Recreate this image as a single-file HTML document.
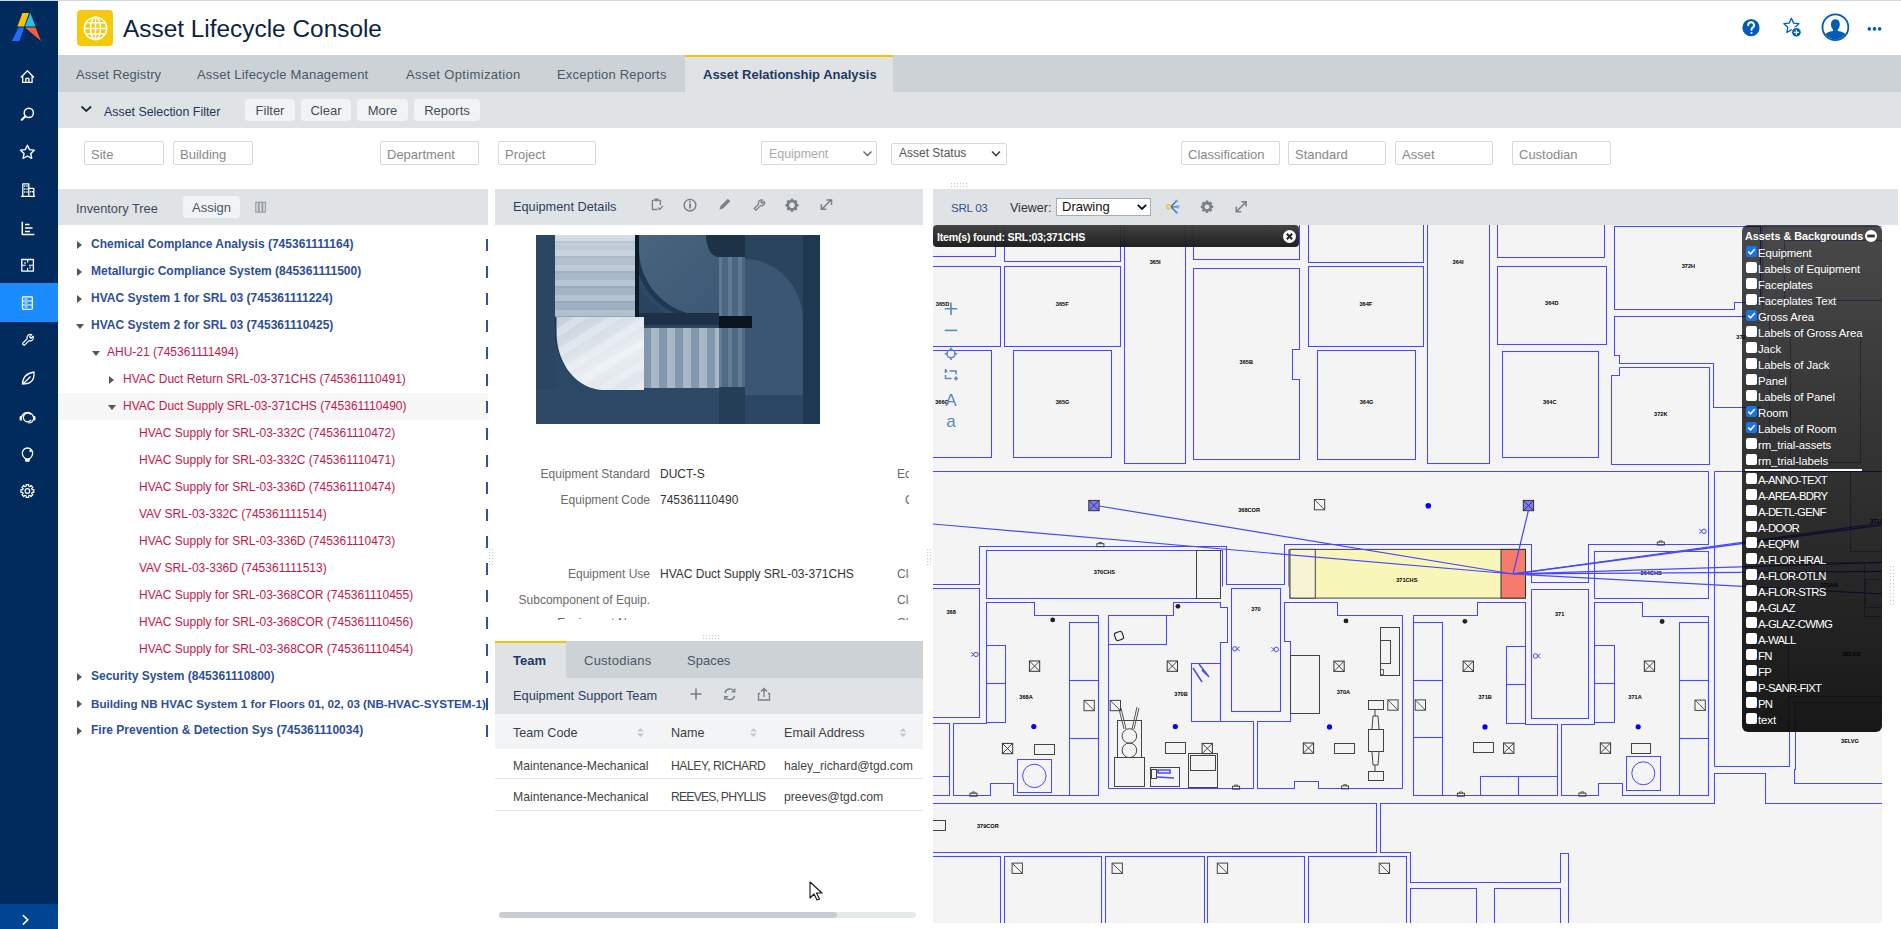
<!DOCTYPE html>
<html><head><meta charset="utf-8">
<style>
*{margin:0;padding:0;box-sizing:border-box}
html,body{width:1901px;height:929px;overflow:hidden;background:#fff;font-family:"Liberation Sans",sans-serif;font-size:12px;color:#333}
.a{position:absolute}
.t{position:absolute;white-space:nowrap;line-height:1}
#topline{left:0;top:0;width:1901px;height:1px;background:#d3d6dc}
#side{left:0;top:1px;width:58px;height:928px;background:#002b5c}
#side .act{left:0;top:282px;width:58px;height:39px;background:#1a8cff}
#side .bot{left:0;top:903px;width:58px;height:26px;background:#004593}
#tabs{left:58px;top:55px;width:1843px;height:37px;background:#cdd2d7}
#fbar{left:58px;top:92px;width:1843px;height:36px;background:#dfe3e6}
.tab{color:#4a5866;font-size:13px;top:68px}
.btn{position:absolute;background:#f1f3f5;border-radius:4px;height:22px;top:99px;color:#454f5a;font-size:13px;text-align:center;line-height:24.5px}
.inp{position:absolute;top:141px;height:24px;border:1px solid #d5d8dc;border-radius:2px;background:#fff;color:#888;font-size:13px;padding-left:6px;line-height:25.5px}
.ph{position:absolute;top:189px;height:36px;background:#dfe3e6}
.tr{position:absolute;white-space:nowrap;font-size:12px;height:27px;line-height:27px}
.lv0{color:#2d4e99;font-weight:bold}
.lv1{color:#c5164a}
.tick{position:absolute;left:486px;width:2px;height:12px;background:#2f5597}
.tri{position:absolute;width:0;height:0}
.tri.r{border-top:4px solid transparent;border-bottom:4px solid transparent;border-left:5px solid #555}
.tri.d{border-left:4px solid transparent;border-right:4px solid transparent;border-top:5px solid #555}
.lbl{position:absolute;right:1251px;color:#6a6a6a;font-size:12px;text-align:right;white-space:nowrap}
.val{position:absolute;left:660px;color:#333;font-size:12px;white-space:nowrap}
.lg{position:absolute;left:1746px;color:#fff;font-size:11.4px;white-space:nowrap;line-height:1}
.cb{position:absolute;left:1746px;width:11px;height:11px;background:#fff;border-radius:2px}
.cb.on{background:#1a73e8}
</style></head><body>
<div id="topline" class="a"></div>
<div id="side" class="a">
  <div class="a act"></div>
  <div class="a bot"></div>
</div>
<!-- header -->
<div class="a" style="left:77px;top:10px;width:36px;height:36px;background:#f7c90c;border-radius:4px"></div>
<div class="t" style="left:123px;top:16.8px;font-size:24.4px;color:#0c2340">Asset Lifecycle Console</div>

<div id="tabs" class="a"></div>
<div id="fbar" class="a"></div>
<div class="a" style="left:685px;top:55px;width:208px;height:37px;background:#dfe3e6;border-top:2px solid #f5c400"></div>
<div class="t tab" style="left:76px;letter-spacing:0.1px">Asset Registry</div>
<div class="t tab" style="left:197px;letter-spacing:0.2px">Asset Lifecycle Management</div>
<div class="t tab" style="left:406px;letter-spacing:0.35px">Asset Optimization</div>
<div class="t tab" style="left:557px;letter-spacing:0.2px">Exception Reports</div>
<div class="t tab" style="left:703px;color:#1d3a5f;font-weight:bold">Asset Relationship Analysis</div>

<div class="t" style="left:104px;top:105.8px;font-size:12.4px;color:#22375a">Asset Selection Filter</div>
<div class="btn" style="left:245px;width:50px">Filter</div>
<div class="btn" style="left:301px;width:50px">Clear</div>
<div class="btn" style="left:357px;width:51px">More</div>
<div class="btn" style="left:414px;width:66px">Reports</div>

<div class="inp" style="left:84px;width:80px">Site</div>
<div class="inp" style="left:173px;width:80px">Building</div>
<div class="inp" style="left:380px;width:99px">Department</div>
<div class="inp" style="left:498px;width:98px">Project</div>
<div class="inp" style="left:761px;width:116px;color:#aaa;font-size:12.4px;padding-left:7px">Equipment</div>
<div class="inp" style="left:891px;top:143px;height:22px;width:116px;color:#555;line-height:19.5px;font-size:12px;padding-left:7px">Asset Status</div>
<div class="inp" style="left:1181px;width:99px">Classification</div>
<div class="inp" style="left:1288px;width:98px">Standard</div>
<div class="inp" style="left:1395px;width:98px">Asset</div>
<div class="inp" style="left:1512px;width:99px">Custodian</div>

<!-- panel headers -->
<div class="ph" style="left:58px;width:430px"></div>
<div class="ph" style="left:495px;width:428px"></div>
<div class="ph" style="left:933px;width:965px"></div>
<div class="t" style="left:76px;top:203px;font-size:12.8px;color:#3d4b5c">Inventory Tree</div>
<div class="a" style="left:183px;top:196px;width:57px;height:22px;background:#f1f3f5;border-radius:4px;color:#4a5866;font-size:13px;text-align:center;line-height:23.5px">Assign</div>
<div class="t" style="left:513px;top:201px;font-size:12.75px;color:#2c3e5c">Equipment Details</div>
<div class="t" style="left:951px;top:202px;font-size:11.6px;letter-spacing:-0.3px;color:#34558a">SRL 03</div>
<div class="t" style="left:1010px;top:202px;font-size:12.5px;color:#333">Viewer:</div>
<div class="a" style="left:1056px;top:198px;width:95px;height:18px;background:#fff;border:1px solid #a9abb8;font-size:13px;color:#111;padding-left:5px;line-height:16px">Drawing</div>

<div id="tree">
<div class="a" style="left:58px;top:393px;width:430px;height:27px;background:#f7f7f7"></div>
<div class="tr lv0" style="left:91px;top:231px;">Chemical Complance Analysis (745361111164)</div>
<div class="tri r" style="left:77px;top:241px"></div>
<div class="tick" style="top:238.5px"></div>
<div class="tr lv0" style="left:91px;top:258px;">Metallurgic Compliance System (845361111500)</div>
<div class="tri r" style="left:77px;top:268px"></div>
<div class="tick" style="top:265.5px"></div>
<div class="tr lv0" style="left:91px;top:285px;">HVAC System 1 for SRL 03 (745361111224)</div>
<div class="tri r" style="left:77px;top:295px"></div>
<div class="tick" style="top:292.5px"></div>
<div class="tr lv0" style="left:91px;top:312px;">HVAC System 2 for SRL 03 (745361110425)</div>
<div class="tri d" style="left:76px;top:323.5px"></div>
<div class="tick" style="top:319.5px"></div>
<div class="tr lv1" style="left:107px;top:339px;">AHU-21 (745361111494)</div>
<div class="tri d" style="left:92px;top:350.5px"></div>
<div class="tick" style="top:346.5px"></div>
<div class="tr lv1" style="left:123px;top:366px;">HVAC Duct Return SRL-03-371CHS (745361110491)</div>
<div class="tri r" style="left:109px;top:376px"></div>
<div class="tick" style="top:373.5px"></div>
<div class="tr lv1" style="left:123px;top:393px;">HVAC Duct Supply SRL-03-371CHS (745361110490)</div>
<div class="tri d" style="left:108px;top:404.5px"></div>
<div class="tick" style="top:400.5px"></div>
<div class="tr lv1" style="left:139px;top:420px;">HVAC Supply for SRL-03-332C (745361110472)</div>
<div class="tick" style="top:427.5px"></div>
<div class="tr lv1" style="left:139px;top:447px;">HVAC Supply for SRL-03-332C (745361110471)</div>
<div class="tick" style="top:454.5px"></div>
<div class="tr lv1" style="left:139px;top:474px;">HVAC Supply for SRL-03-336D (745361110474)</div>
<div class="tick" style="top:481.5px"></div>
<div class="tr lv1" style="left:139px;top:501px;">VAV SRL-03-332C (745361111514)</div>
<div class="tick" style="top:508.5px"></div>
<div class="tr lv1" style="left:139px;top:528px;">HVAC Supply for SRL-03-336D (745361110473)</div>
<div class="tick" style="top:535.5px"></div>
<div class="tr lv1" style="left:139px;top:555px;">VAV SRL-03-336D (745361111513)</div>
<div class="tick" style="top:562.5px"></div>
<div class="tr lv1" style="left:139px;top:582px;">HVAC Supply for SRL-03-368COR (745361110455)</div>
<div class="tick" style="top:589.5px"></div>
<div class="tr lv1" style="left:139px;top:609px;">HVAC Supply for SRL-03-368COR (745361110456)</div>
<div class="tick" style="top:616.5px"></div>
<div class="tr lv1" style="left:139px;top:636px;">HVAC Supply for SRL-03-368COR (745361110454)</div>
<div class="tick" style="top:643.5px"></div>
<div class="tr lv0" style="left:91px;top:663px;">Security System (845361110800)</div>
<div class="tri r" style="left:77px;top:673px"></div>
<div class="tick" style="top:670.5px"></div>
<div class="tr lv0" style="left:91px;top:690px;font-size:11.65px;">Building NB HVAC System 1 for Floors 01, 02, 03 (NB-HVAC-SYSTEM-1)</div>
<div class="tri r" style="left:77px;top:700px"></div>
<div class="tick" style="top:697.5px"></div>
<div class="tr lv0" style="left:91px;top:717px;">Fire Prevention &amp; Detection Sys (745361110034)</div>
<div class="tri r" style="left:77px;top:727px"></div>
<div class="tick" style="top:724.5px"></div>

</div>
<div id="middle">
<!-- middle header icons -->
<svg class="a" style="left:640px;top:192px" width="200" height="26" viewBox="640 192 200 26" fill="none" stroke="#7a7f88" stroke-width="1.4">
  <path d="M654 200.3h-1.6v9.2h5.2M658.8 200.3h1.6v4.6" stroke-linejoin="round" stroke-width="1.3"/><rect x="654.3" y="198.4" width="4.4" height="2.8" rx="0.6" fill="#7a7f88" stroke="none"/><path d="M658 207.6l1.8 1.9 3-3.6" stroke-width="1.3"/>
  <circle cx="690" cy="205.2" r="5.8"/><path d="M690 203.6v5" stroke-width="1.8"/><circle cx="690" cy="201.6" r="1" fill="#7a7f88" stroke="none"/>
  <path d="M719.5 209.6l1-3.5 7.3-7.3 2.5 2.5-7.3 7.3z" fill="#7a7f88" stroke="none"/>
  <g transform="translate(765 199.3) scale(-0.47 0.47)"><path d="M22.7 19l-9.1-9.1c.9-2.3.4-5-1.5-6.9-2-2-5-2.4-7.4-1.3L9 6 6 9 1.6 4.7C.4 7.1.9 10.1 2.9 12.1c1.9 1.9 4.6 2.4 6.9 1.5l9.1 9.1c.4.4 1 .4 1.4 0l2.3-2.3c.5-.4.5-1.1.1-1.4z" stroke-width="2.6" stroke-linejoin="round"/></g>
  <g transform="translate(792 205.2)"><circle r="4.2" stroke-width="2.6"/><path d="M0-6.5v2.2M0 4.3v2.2M-6.5 0h2.2M4.3 0h2.2M-4.6-4.6l1.5 1.5M3.1 3.1l1.5 1.5M-4.6 4.6l1.5-1.5M3.1-3.1l1.5-1.5" stroke-width="2.6"/></g>
  <path d="M822 209l9-9 M826.5 200h5v5 M821.3 204.3v5h5" stroke-width="1.5"/>
</svg>
<!-- photo -->
<svg class="a" style="left:536px;top:235px" width="284" height="189" viewBox="0 0 284 189">
  <defs>
    <linearGradient id="lduct" x1="0" y1="0" x2="0" y2="1"><stop offset="0" stop-color="#c9d4de"/><stop offset="0.45" stop-color="#a9b9c9"/><stop offset="1" stop-color="#9aadbf"/></linearGradient>
    <linearGradient id="elb" x1="0" y1="0" x2="0.6" y2="1"><stop offset="0" stop-color="#c3cfdb"/><stop offset="0.7" stop-color="#e9eef3"/><stop offset="1" stop-color="#dfe6ed"/></linearGradient>
    <linearGradient id="topm" x1="0" y1="0" x2="1" y2="1"><stop offset="0" stop-color="#48647f"/><stop offset="1" stop-color="#3c5874"/></linearGradient>
    <pattern id="hstr" width="10" height="15" patternUnits="userSpaceOnUse"><rect width="10" height="6" fill="#fff" opacity="0.22"/><rect y="6" width="10" height="2" fill="#000" opacity="0.05"/></pattern>
    <pattern id="vstr" width="16" height="10" patternUnits="userSpaceOnUse"><rect x="3" width="8" height="10" fill="#fff" opacity="0.32"/></pattern>
    <pattern id="vstr2" width="10" height="10" patternUnits="userSpaceOnUse"><rect x="2" width="4" height="10" fill="#fff" opacity="0.12"/></pattern>
    <pattern id="dstr" width="18" height="18" patternUnits="userSpaceOnUse" patternTransform="rotate(-32)"><rect width="18" height="8" fill="#fff" opacity="0.25"/></pattern>
  </defs>
  <rect width="284" height="189" fill="#2c4864"/>
  <rect x="0" y="0" width="19" height="189" fill="#2a4662"/>
  <path d="M99 0h85v81h-14c-40 0-71-30-71-66z" fill="url(#topm)"/>
  <path d="M103 15c0 36 31 66 67 66h14v3h-16c-40 0-69-30-69-69z" fill="#1f3750"/>
  <path d="M99 40c8 25 30 45 60 45h25v8h-85z" fill="#2a4460"/>
  <path d="M170 0h45v22h-32c-8 0-13-10-13-22z" fill="#1d3147"/>
  <rect x="183" y="22" width="26" height="59" fill="#4a6682"/>
  <rect x="183" y="22" width="26" height="59" fill="url(#vstr2)"/>
  <rect x="209" y="0" width="75" height="189" fill="#2a4460"/>
  <path d="M209 24c32 0 58 28 58 62v79h-58z" fill="#3a5672"/>
  <rect x="267" y="0" width="17" height="189" fill="#1f3852"/>
  <rect x="99" y="78" width="84" height="12" fill="#1c3048"/>
  <rect x="183" y="81" width="33" height="12" fill="#0a1520"/>
  <rect x="19" y="0" width="80" height="82" fill="url(#lduct)"/>
  <rect x="19" y="0" width="80" height="82" fill="url(#hstr)"/>
  <rect x="99" y="0" width="4" height="93" fill="#0e1a26"/>
  <path d="M19 82h89v73h-40c-27 0-49-26-49-58z" fill="#1e3650"/>
  <path d="M20.5 82h87.5v73h-40c-26.5 0-47.5-25.5-47.5-57.5z" fill="url(#elb)"/>
  <path d="M21 82h87v73h-40c-26 0-47-25-47-57z" fill="url(#dstr)"/>
  <rect x="108" y="93" width="75" height="60" fill="#8097ac"/>
  <rect x="108" y="93" width="75" height="60" fill="url(#vstr)"/>
  <rect x="183" y="93" width="26" height="60" fill="#4f6a85"/>
  <rect x="183" y="93" width="26" height="60" fill="url(#vstr2)"/>
  <rect x="0" y="155" width="183" height="34" fill="#2d4965"/>
  <rect x="183" y="152" width="26" height="37" fill="#243e58"/>
  <rect x="209" y="160" width="58" height="29" fill="#2c4763"/>
</svg>
<!-- form -->
<div style="position:absolute;left:495px;top:440px;width:428px;height:179.5px;overflow:hidden">
  <div class="lbl" style="right:273px;top:27px">Equipment Standard</div>
  <div class="val" style="left:165px;top:27px">DUCT-S</div>
  <div class="lbl" style="right:273px;top:53px">Equipment Code</div>
  <div class="val" style="left:165px;top:53px">745361110490</div>
  <div class="lbl" style="right:273px;top:127px">Equipment Use</div>
  <div class="val" style="left:165px;top:127px">HVAC Duct Supply SRL-03-371CHS</div>
  <div class="lbl" style="right:273px;top:153px">Subcomponent of Equip.</div>
  <div class="lbl" style="right:273px;top:176.3px">Equipment Name</div>
  <div class="lbl" style="left:402px;top:27px;text-align:left">Equipment</div>
  <div class="lbl" style="left:410px;top:53px;text-align:left">Cost</div>
  <div class="lbl" style="left:402px;top:127px;text-align:left">Classification</div>
  <div class="lbl" style="left:402px;top:153px;text-align:left">Classification</div>
  <div class="lbl" style="left:402px;top:176.3px;text-align:left">Classification</div>
</div>
<div class="a" style="left:909px;top:440px;width:14px;height:180px;background:#fff"></div>
<!-- splitter grips -->
<svg class="a" style="left:700px;top:634px" width="24" height="6"><g fill="#c8ccd1"><rect x="3" y="1" width="1.2" height="1.2"/><rect x="6" y="1" width="1.2" height="1.2"/><rect x="9" y="1" width="1.2" height="1.2"/><rect x="12" y="1" width="1.2" height="1.2"/><rect x="15" y="1" width="1.2" height="1.2"/><rect x="18" y="1" width="1.2" height="1.2"/><rect x="3" y="4" width="1.2" height="1.2"/><rect x="6" y="4" width="1.2" height="1.2"/><rect x="9" y="4" width="1.2" height="1.2"/><rect x="12" y="4" width="1.2" height="1.2"/><rect x="15" y="4" width="1.2" height="1.2"/><rect x="18" y="4" width="1.2" height="1.2"/></g></svg>
<svg class="a" style="left:948px;top:182px" width="24" height="6"><g fill="#c8ccd1"><rect x="3" y="1" width="1.2" height="1.2"/><rect x="6" y="1" width="1.2" height="1.2"/><rect x="9" y="1" width="1.2" height="1.2"/><rect x="12" y="1" width="1.2" height="1.2"/><rect x="15" y="1" width="1.2" height="1.2"/><rect x="18" y="1" width="1.2" height="1.2"/><rect x="3" y="4" width="1.2" height="1.2"/><rect x="6" y="4" width="1.2" height="1.2"/><rect x="9" y="4" width="1.2" height="1.2"/><rect x="12" y="4" width="1.2" height="1.2"/><rect x="15" y="4" width="1.2" height="1.2"/><rect x="18" y="4" width="1.2" height="1.2"/></g></svg>
<svg class="a" style="left:488px;top:546px" width="6" height="24"><g fill="#c8ccd1"><rect x="1" y="3" width="1.2" height="1.2"/><rect x="1" y="6" width="1.2" height="1.2"/><rect x="1" y="9" width="1.2" height="1.2"/><rect x="1" y="12" width="1.2" height="1.2"/><rect x="1" y="15" width="1.2" height="1.2"/><rect x="1" y="18" width="1.2" height="1.2"/><rect x="4" y="3" width="1.2" height="1.2"/><rect x="4" y="6" width="1.2" height="1.2"/><rect x="4" y="9" width="1.2" height="1.2"/><rect x="4" y="12" width="1.2" height="1.2"/><rect x="4" y="15" width="1.2" height="1.2"/><rect x="4" y="18" width="1.2" height="1.2"/></g></svg>
<svg class="a" style="left:926px;top:546px" width="6" height="24"><g fill="#c8ccd1"><rect x="1" y="3" width="1.2" height="1.2"/><rect x="1" y="6" width="1.2" height="1.2"/><rect x="1" y="9" width="1.2" height="1.2"/><rect x="1" y="12" width="1.2" height="1.2"/><rect x="1" y="15" width="1.2" height="1.2"/><rect x="1" y="18" width="1.2" height="1.2"/><rect x="4" y="3" width="1.2" height="1.2"/><rect x="4" y="6" width="1.2" height="1.2"/><rect x="4" y="9" width="1.2" height="1.2"/><rect x="4" y="12" width="1.2" height="1.2"/><rect x="4" y="15" width="1.2" height="1.2"/><rect x="4" y="18" width="1.2" height="1.2"/></g></svg>
<svg class="a" style="left:1889px;top:563px" width="6" height="46"><g fill="#c8ccd1"><rect x="1" y="3.0" width="1.2" height="1.2"/><rect x="4" y="3.0" width="1.2" height="1.2"/><rect x="1" y="6.4" width="1.2" height="1.2"/><rect x="4" y="6.4" width="1.2" height="1.2"/><rect x="1" y="9.8" width="1.2" height="1.2"/><rect x="4" y="9.8" width="1.2" height="1.2"/><rect x="1" y="13.2" width="1.2" height="1.2"/><rect x="4" y="13.2" width="1.2" height="1.2"/><rect x="1" y="16.6" width="1.2" height="1.2"/><rect x="4" y="16.6" width="1.2" height="1.2"/><rect x="1" y="20.0" width="1.2" height="1.2"/><rect x="4" y="20.0" width="1.2" height="1.2"/><rect x="1" y="23.4" width="1.2" height="1.2"/><rect x="4" y="23.4" width="1.2" height="1.2"/><rect x="1" y="26.8" width="1.2" height="1.2"/><rect x="4" y="26.8" width="1.2" height="1.2"/><rect x="1" y="30.2" width="1.2" height="1.2"/><rect x="4" y="30.2" width="1.2" height="1.2"/><rect x="1" y="33.6" width="1.2" height="1.2"/><rect x="4" y="33.6" width="1.2" height="1.2"/><rect x="1" y="37.0" width="1.2" height="1.2"/><rect x="4" y="37.0" width="1.2" height="1.2"/><rect x="1" y="40.4" width="1.2" height="1.2"/><rect x="4" y="40.4" width="1.2" height="1.2"/></g></svg>
<!-- tabs -->
<div class="a" style="left:495px;top:641px;width:428px;height:37px;background:#cdd2d7"></div>
<div class="a" style="left:495px;top:641px;width:71px;height:37px;background:#dfe3e6;border-top:2px solid #f5c400"></div>
<div class="t" style="left:513px;top:654px;font-size:13px;font-weight:bold;color:#1d3a5f">Team</div>
<div class="t" style="left:584px;top:654px;font-size:13px;color:#4a5866;letter-spacing:0.25px">Custodians</div>
<div class="t" style="left:687px;top:654px;font-size:13px;color:#4a5866">Spaces</div>
<div class="a" style="left:495px;top:678px;width:428px;height:36px;background:#dfe3e6"></div>
<div class="t" style="left:513px;top:690px;font-size:12.8px;color:#2c3e5c">Equipment Support Team</div>
<svg class="a" style="left:680px;top:682px" width="100" height="24" viewBox="680 682 100 24" fill="none" stroke="#7a7f88">
  <path d="M696 688.5v11M690.5 694h11" stroke-width="1.6"/>
  <path d="M734.3 691.5a5 5 0 0 0-9.3 1.5M725.2 697a5 5 0 0 0 9.3-1.2" stroke-width="1.4"/><path d="M734.8 688.5v3.3h-3.3M724.8 700v-3.3h3.3" stroke-width="1.3"/>
  <path d="M760 693.5h-1.5v6.5h11v-6.5h-1.5M764 697v-8.5M761 691.5l3-3 3 3" stroke-width="1.3"/>
</svg>
<div class="a" style="left:495px;top:714px;width:428px;height:35px;background:#f3f4f6"></div>
<div class="t" style="left:513px;top:727px;font-size:12.6px;color:#3a3f45">Team Code</div>
<div class="t" style="left:671px;top:727px;font-size:12.6px;color:#3a3f45">Name</div>
<div class="t" style="left:784px;top:727px;font-size:12.6px;color:#3a3f45">Email Address</div>
<svg class="a" style="left:630px;top:724px" width="280" height="18" viewBox="630 724 280 18" fill="#c5c9ce">
  <path d="M637 731.5l3.5-3.5 3.5 3.5zM637 733.5l3.5 3.5 3.5-3.5z"/>
  <path d="M750 731.5l3.5-3.5 3.5 3.5zM750 733.5l3.5 3.5 3.5-3.5z"/>
  <path d="M899.5 731.5l3.5-3.5 3.5 3.5zM899.5 733.5l3.5 3.5 3.5-3.5z"/>
</svg>
<div class="t" style="left:513px;top:760px;font-size:12.2px;color:#444">Maintenance-Mechanical</div>
<div class="t" style="left:671px;top:760px;font-size:12.2px;color:#444;letter-spacing:-0.45px">HALEY, RICHARD</div>
<div class="t" style="left:784px;top:760px;font-size:12.2px;color:#444">haley_richard@tgd.com</div>
<div class="a" style="left:495px;top:778px;width:428px;height:1px;background:#e3e5e8"></div>
<div class="t" style="left:513px;top:791px;font-size:12.2px;color:#444">Maintenance-Mechanical</div>
<div class="t" style="left:671px;top:791px;font-size:12.2px;color:#444;letter-spacing:-0.8px">REEVES, PHYLLIS</div>
<div class="t" style="left:784px;top:791px;font-size:12.2px;color:#444">preeves@tgd.com</div>
<div class="a" style="left:495px;top:810px;width:428px;height:1px;background:#e3e5e8"></div>
<!-- h scrollbar -->
<div class="a" style="left:499px;top:912px;width:417px;height:6px;background:#e6e9ea;border-radius:3px"></div>
<div class="a" style="left:499px;top:912px;width:338px;height:6px;background:#c9cdd2;border-radius:3px"></div>
<!-- cursor -->
<svg class="a" style="left:808px;top:880px" width="16" height="22" viewBox="0 0 16 22"><path d="M2 2v16l4-4 3 6 2.5-1-3-6h5.5z" fill="#fff" stroke="#111" stroke-width="1.1" stroke-linejoin="round"/></svg>

</div>
<div id="drawing">
<svg class="a" style="left:933px;top:225px" width="949" height="698" viewBox="933 225 949 698">
<rect x="933" y="225" width="949" height="698" fill="#f4f4f4"/>
<rect x="920.5" y="200.5" width="75.0" height="56.0" stroke="#4848ff" stroke-width="1.05" fill="none"/>
<rect x="1004.5" y="200.5" width="116.0" height="61.0" stroke="#4848ff" stroke-width="1.05" fill="none"/>
<rect x="1124.5" y="200.5" width="61.0" height="263.0" stroke="#4848ff" stroke-width="1.05" fill="none"/>
<rect x="1193.5" y="200.5" width="106.0" height="59.0" stroke="#4848ff" stroke-width="1.05" fill="none"/>
<rect x="920.5" y="266.5" width="80.0" height="80.0" stroke="#4848ff" stroke-width="1.05" fill="none"/>
<rect x="1004.5" y="266.5" width="116.0" height="80.0" stroke="#4848ff" stroke-width="1.05" fill="none"/>
<rect x="920.5" y="350.5" width="71.0" height="107.0" stroke="#4848ff" stroke-width="1.05" fill="none"/>
<rect x="1013.5" y="350.5" width="98.0" height="107.0" stroke="#4848ff" stroke-width="1.05" fill="none"/>
<path d="M1193.5 268.5 L1299.5 268.5 L1299.5 349.5 L1292.5 349.5 L1292.5 379.5 L1299.5 379.5 L1299.5 459.5 L1193.5 459.5 Z" stroke="#4848ff" stroke-width="1.05" fill="none"/>
<rect x="1308.5" y="200.5" width="115.0" height="62.0" stroke="#4848ff" stroke-width="1.05" fill="none"/>
<rect x="1308.5" y="266.5" width="115.0" height="80.0" stroke="#4848ff" stroke-width="1.05" fill="none"/>
<rect x="1317.5" y="350.5" width="98.0" height="109.0" stroke="#4848ff" stroke-width="1.05" fill="none"/>
<rect x="1427.5" y="200.5" width="62.0" height="263.0" stroke="#4848ff" stroke-width="1.05" fill="none"/>
<rect x="1497.5" y="200.5" width="107.0" height="57.0" stroke="#4848ff" stroke-width="1.05" fill="none"/>
<rect x="1497.5" y="266.5" width="109.0" height="78.0" stroke="#4848ff" stroke-width="1.05" fill="none"/>
<rect x="1502.5" y="351.5" width="96.0" height="106.0" stroke="#4848ff" stroke-width="1.05" fill="none"/>
<path d="M1614.5 226.5 L1760.5 226.5 L1760.5 302.5 L1734.5 302.5 L1734.5 309.5 L1614.5 309.5 Z" stroke="#4848ff" stroke-width="1.05" fill="none"/>
<path d="M1760.5 316.5 L1614.5 316.5 L1614.5 355.5 L1619.5 355.5 L1619.5 363.5 L1713.5 363.5 L1713.5 407.5 L1760.5 407.5" stroke="#4848ff" stroke-width="1.05" fill="none"/>
<path d="M1619.5 367.5 L1709.5 367.5 L1709.5 464.5 L1611.5 464.5 L1611.5 375.5 L1619.5 375.5 L1619.5 367.5" stroke="#4848ff" stroke-width="1.05" fill="none"/>
<line x1="920.5" y1="471.5" x2="1708.5" y2="471.5" stroke="#4848ff" stroke-width="1.05"/>
<line x1="1714.5" y1="471.5" x2="1900.5" y2="471.5" stroke="#4848ff" stroke-width="1.05"/>
<path d="M920.5 584.5 L979.5 584.5 L979.5 546.5 L1226.5 546.5 L1226.5 584.5 L1284.5 584.5 L1284.5 544.5 L1531.5 544.5 L1531.5 582.5 L1588.5 582.5 L1588.5 544.5 L1708.5 544.5 L1708.5 471.5" stroke="#4848ff" stroke-width="1.05" fill="none"/>
<line x1="1714.5" y1="471.5" x2="1714.5" y2="766.5" stroke="#4848ff" stroke-width="1.05"/>
<path d="M1222.5 586.5 L1222.5 550.5 L986.5 550.5 L986.5 598.5 L1220.5 598.5" stroke="#4848ff" stroke-width="1.05" fill="none"/>
<rect x="1196.5" y="550.5" width="24.0" height="48.0" stroke="#444" stroke-width="1" fill="none"/>
<rect x="1290" y="549.4" width="235.5" height="48.7" fill="#f8f6b9" stroke="#444" stroke-width="1"/>
<rect x="1290" y="549.4" width="25.3" height="48.7" fill="#f6f4d4" stroke="#444" stroke-width="1"/>
<line x1="1288.5" y1="549.5" x2="1288.5" y2="586.5" stroke="#777" stroke-width="0.8"/>
<rect x="1501" y="549.4" width="24.5" height="48.7" fill="#f77b6b" stroke="#333" stroke-width="1"/>
<path d="M1594.5 598.5 L1594.5 551.5 L1708.5 551.5 L1708.5 598.5 L1594.5 598.5" stroke="#4848ff" stroke-width="1.05" fill="none"/>
<path d="M920.5 588.5 L979.5 588.5 L979.5 717.5 L920.5 717.5" stroke="#4848ff" stroke-width="1.05" fill="none"/>
<path d="M1098.5 795.5 L1098.5 615.5 L1034.5 615.5 L1034.5 602.5 L986.5 602.5 L986.5 723.5 L953.5 723.5 L953.5 795.5 L990.5 795.5 L990.5 783.5 L1013.5 783.5 L1013.5 795.5 L1098.5 795.5" stroke="#4848ff" stroke-width="1.05" fill="none"/>
<rect x="986.5" y="645.5" width="19.0" height="38.0" stroke="#4848ff" stroke-width="1.05" fill="none"/>
<rect x="986.5" y="683.5" width="19.0" height="39.0" stroke="#4848ff" stroke-width="1.05" fill="none"/>
<rect x="1069.5" y="622.5" width="29.0" height="58.0" stroke="#4848ff" stroke-width="1.05" fill="none"/>
<rect x="1069.5" y="680.5" width="29.0" height="58.0" stroke="#4848ff" stroke-width="1.05" fill="none"/>
<rect x="1069.5" y="738.5" width="29.0" height="57.0" stroke="#4848ff" stroke-width="1.05" fill="none"/>
<path d="M920.5 723.5 L949.5 723.5 L949.5 795.5 L920.5 795.5" stroke="#4848ff" stroke-width="1.05" fill="none"/>
<line x1="920.5" y1="776.5" x2="949.5" y2="776.5" stroke="#4848ff" stroke-width="1.05"/>
<path d="M1108.5 788.5 L1108.5 615.5 L1173.5 615.5 L1173.5 602.5 L1220.5 602.5 L1220.5 607.5 L1227.5 607.5 L1227.5 642.5 L1220.5 642.5 L1220.5 721.5 L1253.5 721.5 L1253.5 788.5 L1108.5 788.5" stroke="#4848ff" stroke-width="1.05" fill="none"/>
<rect x="1108.5" y="615.5" width="58.0" height="29.0" stroke="#4848ff" stroke-width="1.05" fill="none"/>
<rect x="1191.5" y="663.5" width="29.0" height="58.0" stroke="#4848ff" stroke-width="1.05" fill="none"/>
<rect x="1231.5" y="588.5" width="49.0" height="123.0" stroke="#4848ff" stroke-width="1.05" fill="none"/>
<path d="M1402.5 788.5 L1402.5 615.5 L1337.5 615.5 L1337.5 602.5 L1284.5 602.5 L1284.5 641.5 L1290.5 641.5 L1290.5 721.5 L1257.5 721.5 L1257.5 788.5 L1294.5 788.5 L1294.5 781.5 L1318.5 781.5 L1318.5 788.5 L1402.5 788.5" stroke="#4848ff" stroke-width="1.05" fill="none"/>
<path d="M1413.5 795.5 L1413.5 615.5 L1477.5 615.5 L1477.5 602.5 L1525.5 602.5 L1525.5 724.5 L1557.5 724.5 L1557.5 795.5 L1413.5 795.5" stroke="#4848ff" stroke-width="1.05" fill="none"/>
<rect x="1413.5" y="622.5" width="29.0" height="58.0" stroke="#4848ff" stroke-width="1.05" fill="none"/>
<rect x="1413.5" y="680.5" width="29.0" height="57.0" stroke="#4848ff" stroke-width="1.05" fill="none"/>
<rect x="1413.5" y="737.5" width="29.0" height="58.0" stroke="#4848ff" stroke-width="1.05" fill="none"/>
<rect x="1506.5" y="646.5" width="19.0" height="38.0" stroke="#4848ff" stroke-width="1.05" fill="none"/>
<rect x="1506.5" y="684.5" width="19.0" height="39.0" stroke="#4848ff" stroke-width="1.05" fill="none"/>
<rect x="1480.5" y="776.5" width="38.0" height="19.0" stroke="#4848ff" stroke-width="1.05" fill="none"/>
<rect x="1518.5" y="776.5" width="39.0" height="19.0" stroke="#4848ff" stroke-width="1.05" fill="none"/>
<path d="M1531.5 589.5 L1588.5 589.5 L1588.5 718.5 L1531.5 718.5 L1531.5 589.5" stroke="#4848ff" stroke-width="1.05" fill="none"/>
<path d="M1708.5 795.5 L1708.5 616.5 L1642.5 616.5 L1642.5 602.5 L1594.5 602.5 L1594.5 724.5 L1561.5 724.5 L1561.5 795.5 L1598.5 795.5 L1598.5 783.5 L1622.5 783.5 L1622.5 795.5 L1708.5 795.5" stroke="#4848ff" stroke-width="1.05" fill="none"/>
<rect x="1594.5" y="645.5" width="20.0" height="38.0" stroke="#4848ff" stroke-width="1.05" fill="none"/>
<rect x="1594.5" y="683.5" width="20.0" height="39.0" stroke="#4848ff" stroke-width="1.05" fill="none"/>
<rect x="1679.5" y="622.5" width="29.0" height="58.0" stroke="#4848ff" stroke-width="1.05" fill="none"/>
<rect x="1679.5" y="680.5" width="29.0" height="58.0" stroke="#4848ff" stroke-width="1.05" fill="none"/>
<rect x="1679.5" y="738.5" width="29.0" height="57.0" stroke="#4848ff" stroke-width="1.05" fill="none"/>
<line x1="1561.5" y1="795.5" x2="1561.5" y2="724.5" stroke="#4848ff" stroke-width="1.05"/>
<path d="M1714.5 766.5 L1789.5 766.5 L1789.5 731.5" stroke="#4848ff" stroke-width="1.05" fill="none"/>
<path d="M1795.5 731.5 L1795.5 769.5 L1794.5 769.5 L1794.5 783.5 L1900.5 783.5" stroke="#4848ff" stroke-width="1.05" fill="none"/>
<path d="M920.5 803.5 L1376.5 803.5 L1376.5 852.5 L920.5 852.5" stroke="#4848ff" stroke-width="1.05" fill="none"/>
<path d="M1900.5 803.5 L1765.5 803.5 L1765.5 773.5 L1714.5 773.5 L1714.5 803.5 L1380.5 803.5 L1380.5 852.5 L1410.5 852.5 L1410.5 882.5 L1560.5 882.5 L1560.5 853.5 L1568.5 853.5 L1568.5 930.5" stroke="#4848ff" stroke-width="1.05" fill="none"/>
<rect x="920.5" y="856.5" width="80.0" height="84.0" stroke="#4848ff" stroke-width="1.05" fill="none"/>
<rect x="1004.5" y="856.5" width="97.0" height="84.0" stroke="#4848ff" stroke-width="1.05" fill="none"/>
<rect x="1105.5" y="856.5" width="99.0" height="84.0" stroke="#4848ff" stroke-width="1.05" fill="none"/>
<rect x="1207.5" y="856.5" width="97.0" height="84.0" stroke="#4848ff" stroke-width="1.05" fill="none"/>
<rect x="1308.5" y="856.5" width="98.0" height="84.0" stroke="#4848ff" stroke-width="1.05" fill="none"/>
<rect x="1410.5" y="888.5" width="66.0" height="52.0" stroke="#4848ff" stroke-width="1.05" fill="none"/>
<rect x="1494.5" y="888.5" width="66.0" height="52.0" stroke="#4848ff" stroke-width="1.05" fill="none"/>
<g opacity="0.5">
<path d="M1760.5 226.5 L1882.5 226.5" stroke="#4848ff" stroke-width="1.05" fill="none"/>
<path d="M1762.5 226.5 L1762.5 309.5" stroke="#4848ff" stroke-width="1.05" fill="none"/>
<path d="M1769.5 316.5 L1769.5 470.5" stroke="#4848ff" stroke-width="1.05" fill="none"/>
<rect x="1784.5" y="240.5" width="98.0" height="60.0" stroke="#4848ff" stroke-width="1.05" fill="none"/>
<rect x="1790.5" y="330.5" width="70.0" height="132.0" stroke="#4848ff" stroke-width="1.05" fill="none"/>
<path d="M1850.5 471.5 L1850.5 551.5 L1882.5 551.5" stroke="#4848ff" stroke-width="1.05" fill="none"/>
<path d="M1788.5 731.5 L1788.5 562.5 L1864.5 562.5 L1864.5 616.5 L1882.5 616.5" stroke="#4848ff" stroke-width="1.05" fill="none"/>
<rect x="1865.5" y="579.5" width="25.0" height="28.0" stroke="#4848ff" stroke-width="1.05" fill="none"/>
<path d="M1795.5 731.5 L1795.5 702.5 L1882.5 702.5" stroke="#4848ff" stroke-width="1.05" fill="none"/>
<path d="M1788.5 696.5 L1882.5 696.5" stroke="#4848ff" stroke-width="1.05" fill="none"/>
</g>
<rect x="1088.8" y="500.4" width="10.3" height="10.3" stroke="#333" stroke-width="1" fill="#7b7bff"/>
<path d="M1088.8 500.4L1099.0 510.7M1099.0 500.4L1088.8 510.7" stroke="#333" stroke-width="0.9"/>
<rect x="1523.3" y="500.4" width="10.3" height="10.3" stroke="#333" stroke-width="1" fill="#7b7bff"/>
<path d="M1523.3 500.4L1533.6 510.7M1533.6 500.4L1523.3 510.7" stroke="#333" stroke-width="0.9"/>
<rect x="1314.4" y="499.5" width="10.3" height="10.3" stroke="#444" stroke-width="1" fill="none"/>
<path d="M1314.4 499.5L1324.7 509.8" stroke="#444" stroke-width="0.9"/>
<circle cx="1428.3" cy="505.8" r="2.8" fill="#0000ff"/>
<circle cx="1052.7" cy="619.9" r="2.4" fill="#222"/>
<circle cx="1177.9" cy="606.3" r="2.4" fill="#222"/>
<circle cx="1346" cy="620.9" r="2.4" fill="#222"/>
<circle cx="1464.9" cy="621.3" r="2.4" fill="#222"/>
<circle cx="1662.1" cy="621.5" r="2.4" fill="#222"/>
<rect x="1029.4" y="661.0" width="10.3" height="10.3" stroke="#333" stroke-width="1" fill="none"/>
<path d="M1029.4 661.0L1039.7 671.2M1039.7 661.0L1029.4 671.2" stroke="#333" stroke-width="0.9"/>
<rect x="1167.2" y="661.0" width="10.3" height="10.3" stroke="#333" stroke-width="1" fill="none"/>
<path d="M1167.2 661.0L1177.5 671.2M1177.5 661.0L1167.2 671.2" stroke="#333" stroke-width="0.9"/>
<rect x="1333.9" y="661.1" width="10.3" height="10.3" stroke="#333" stroke-width="1" fill="none"/>
<path d="M1333.9 661.1L1344.2 671.4M1344.2 661.1L1333.9 671.4" stroke="#333" stroke-width="0.9"/>
<rect x="1463.1" y="661.1" width="10.3" height="10.3" stroke="#333" stroke-width="1" fill="none"/>
<path d="M1463.1 661.1L1473.4 671.4M1473.4 661.1L1463.1 671.4" stroke="#333" stroke-width="0.9"/>
<rect x="1644.3" y="661.0" width="10.3" height="10.3" stroke="#333" stroke-width="1" fill="none"/>
<path d="M1644.3 661.0L1654.6 671.2M1654.6 661.0L1644.3 671.2" stroke="#333" stroke-width="0.9"/>
<rect x="1002.4" y="743.4" width="10.3" height="10.3" stroke="#333" stroke-width="1" fill="none"/>
<path d="M1002.4 743.4L1012.6 753.6M1012.6 743.4L1002.4 753.6" stroke="#333" stroke-width="0.9"/>
<rect x="1202.1" y="743.4" width="10.3" height="10.3" stroke="#333" stroke-width="1" fill="none"/>
<path d="M1202.1 743.4L1212.4 753.6M1212.4 743.4L1202.1 753.6" stroke="#333" stroke-width="0.9"/>
<rect x="1303.3" y="743.0" width="10.3" height="10.3" stroke="#333" stroke-width="1" fill="none"/>
<path d="M1303.3 743.0L1313.6 753.2M1313.6 743.0L1303.3 753.2" stroke="#333" stroke-width="0.9"/>
<rect x="1503.6" y="743.0" width="10.3" height="10.3" stroke="#333" stroke-width="1" fill="none"/>
<path d="M1503.6 743.0L1513.9 753.2M1513.9 743.0L1503.6 753.2" stroke="#333" stroke-width="0.9"/>
<rect x="1600.3" y="743.0" width="10.3" height="10.3" stroke="#333" stroke-width="1" fill="none"/>
<path d="M1600.3 743.0L1610.6 753.2M1610.6 743.0L1600.3 753.2" stroke="#333" stroke-width="0.9"/>
<rect x="1084.0" y="700.4" width="10.3" height="10.3" stroke="#444" stroke-width="1" fill="none"/>
<path d="M1084.0 700.4L1094.3 710.6" stroke="#444" stroke-width="0.9"/>
<rect x="1110.2" y="700.4" width="10.3" height="10.3" stroke="#444" stroke-width="1" fill="none"/>
<path d="M1110.2 700.4L1120.5 710.6" stroke="#444" stroke-width="0.9"/>
<rect x="1387.8" y="699.9" width="10.3" height="10.3" stroke="#444" stroke-width="1" fill="none"/>
<path d="M1387.8 699.9L1398.0 710.1" stroke="#444" stroke-width="0.9"/>
<rect x="1415.2" y="699.9" width="10.3" height="10.3" stroke="#444" stroke-width="1" fill="none"/>
<path d="M1415.2 699.9L1425.5 710.1" stroke="#444" stroke-width="0.9"/>
<rect x="1695.0" y="700.1" width="10.3" height="10.3" stroke="#444" stroke-width="1" fill="none"/>
<path d="M1695.0 700.1L1705.3 710.4" stroke="#444" stroke-width="0.9"/>
<rect x="1012.1" y="863.1" width="10.3" height="10.3" stroke="#444" stroke-width="1" fill="none"/>
<path d="M1012.1 863.1L1022.4 873.4" stroke="#444" stroke-width="0.9"/>
<rect x="1112.1" y="863.1" width="10.3" height="10.3" stroke="#444" stroke-width="1" fill="none"/>
<path d="M1112.1 863.1L1122.4 873.4" stroke="#444" stroke-width="0.9"/>
<rect x="1217.3" y="863.1" width="10.3" height="10.3" stroke="#444" stroke-width="1" fill="none"/>
<path d="M1217.3 863.1L1227.6 873.4" stroke="#444" stroke-width="0.9"/>
<rect x="1379.2" y="863.2" width="10.3" height="10.3" stroke="#444" stroke-width="1" fill="none"/>
<path d="M1379.2 863.2L1389.5 873.5" stroke="#444" stroke-width="0.9"/>
<circle cx="1033.8" cy="726.5" r="2.6" fill="#0000ff"/>
<circle cx="1175.3" cy="726.5" r="2.6" fill="#0000ff"/>
<circle cx="1329.5" cy="726.9" r="2.6" fill="#0000ff"/>
<circle cx="1485" cy="726.9" r="2.6" fill="#0000ff"/>
<circle cx="1638.2" cy="726.8" r="2.6" fill="#0000ff"/>
<rect x="1034.5" y="744.5" width="20.0" height="10.0" stroke="#444" stroke-width="1" fill="none"/>
<rect x="1165.5" y="742.5" width="20.0" height="11.0" stroke="#444" stroke-width="1" fill="none"/>
<rect x="1334.5" y="743.5" width="20.0" height="10.0" stroke="#444" stroke-width="1" fill="none"/>
<rect x="1473.5" y="742.5" width="20.0" height="10.0" stroke="#444" stroke-width="1" fill="none"/>
<rect x="1631.5" y="743.5" width="19.0" height="10.0" stroke="#444" stroke-width="1" fill="none"/>
<rect x="1017.5" y="759.5" width="34.0" height="33.0" stroke="#4848ff" stroke-width="1" fill="none"/>
<circle cx="1034.3" cy="775.9" r="11.7" stroke="#4848ff" stroke-width="1" fill="none"/>
<rect x="1626.5" y="756.5" width="34.0" height="34.0" stroke="#4848ff" stroke-width="1" fill="none"/>
<circle cx="1643.3" cy="773.3" r="11.5" stroke="#4848ff" stroke-width="1" fill="none"/>
<rect x="1117.5" y="720.5" width="24.0" height="37.0" stroke="#444" stroke-width="1" fill="none"/>
<circle cx="1129.4" cy="736" r="7.3" stroke="#444" stroke-width="1" fill="none"/><circle cx="1129.4" cy="750.3" r="7.3" stroke="#444" stroke-width="1" fill="none"/>
<path d="M1126 729L1121 708M1124 729L1119 709M1132 729L1137 707M1134 729L1139 708" stroke="#555" stroke-width="1"/>
<rect x="1114.5" y="757.5" width="30.0" height="29.0" stroke="#444" stroke-width="1" fill="none"/>
<rect x="1150.5" y="767.5" width="29.0" height="19.0" stroke="#444" stroke-width="1" fill="none"/>
<rect x="1151.5" y="769.5" width="5.0" height="9.0" stroke="#444" stroke-width="1" fill="none"/>
<path d="M1158 770h12v3h-12zM1157 777l17 1" stroke="#4848ff" stroke-width="1.6" fill="none"/>
<rect x="1188.5" y="753.5" width="29.0" height="34.0" stroke="#444" stroke-width="1" fill="none"/>
<rect x="1190.5" y="755.5" width="25.0" height="15.0" stroke="#444" stroke-width="1" fill="none"/>
<rect x="1290.5" y="655.5" width="29.0" height="58.0" stroke="#444" stroke-width="1" fill="none"/>
<rect x="1380.5" y="627.5" width="19.0" height="48.0" stroke="#444" stroke-width="1" fill="none"/>
<rect x="1380.5" y="640.5" width="10.0" height="23.0" stroke="#444" stroke-width="1" fill="none"/>
<rect x="1380.5" y="669.5" width="3.0" height="5.0" stroke="#444" stroke-width="0.8" fill="none"/>
<rect x="1368.5" y="700.5" width="15.0" height="9.0" stroke="#444" stroke-width="1" fill="none"/>
<rect x="1368.5" y="729.5" width="15.0" height="22.0" stroke="#444" stroke-width="1" fill="none"/>
<rect x="1368.5" y="771.5" width="15.0" height="9.0" stroke="#444" stroke-width="1" fill="none"/>
<path d="M1372 729L1373 716h5l1 13M1372 752L1373 765h5l1-13M1375 709v7M1375 765v6" stroke="#444" stroke-width="1" fill="none"/>
<rect x="920.5" y="820.5" width="25.0" height="10.0" stroke="#444" stroke-width="1" fill="none"/>
<rect x="1115" y="632" width="8" height="8" rx="2" transform="rotate(-20 1119 636)" stroke="#333" stroke-width="1.2" fill="none"/>
<path d="M1193 668l9 14M1199 664l10 13M1202 670l5 5" stroke="#4848ff" stroke-width="1.5" fill="none"/>
<rect x="1096.9" y="543.7" width="7" height="3" stroke="#333" stroke-width="0.9" fill="none"/><path d="M1098.9 543.7v-1.2h3v1.2" stroke="#333" stroke-width="0.8" fill="none"/>
<rect x="970.0" y="793.2" width="7" height="3" stroke="#333" stroke-width="0.9" fill="none"/><path d="M972.0 793.2v-1.2h3v1.2" stroke="#333" stroke-width="0.8" fill="none"/>
<rect x="1232.6" y="786.2" width="7" height="3" stroke="#333" stroke-width="0.9" fill="none"/><path d="M1234.6 786.2v-1.2h3v1.2" stroke="#333" stroke-width="0.8" fill="none"/>
<rect x="1341.6" y="785.9" width="7" height="3" stroke="#333" stroke-width="0.9" fill="none"/><path d="M1343.6 785.9v-1.2h3v1.2" stroke="#333" stroke-width="0.8" fill="none"/>
<rect x="1457.4" y="793.2" width="7" height="3" stroke="#333" stroke-width="0.9" fill="none"/><path d="M1459.4 793.2v-1.2h3v1.2" stroke="#333" stroke-width="0.8" fill="none"/>
<rect x="1578.9" y="793.1" width="7" height="3" stroke="#333" stroke-width="0.9" fill="none"/><path d="M1580.9 793.1v-1.2h3v1.2" stroke="#333" stroke-width="0.8" fill="none"/>
<rect x="1657.3" y="542.1" width="7" height="3" stroke="#333" stroke-width="0.9" fill="none"/><path d="M1659.3 542.1v-1.2h3v1.2" stroke="#333" stroke-width="0.8" fill="none"/>
<circle cx="976" cy="654.4" r="2.2" stroke="#4848ff" stroke-width="1" fill="none"/><path d="M971 652.4L974 654.4L971 656.4" stroke="#4848ff" stroke-width="0.9" fill="none"/>
<circle cx="1234.8" cy="648.8" r="2.2" stroke="#4848ff" stroke-width="1" fill="none"/><path d="M1239.8 646.8L1236.8 648.8L1239.8 650.8" stroke="#4848ff" stroke-width="0.9" fill="none"/>
<circle cx="1276.3" cy="649.4" r="2.2" stroke="#4848ff" stroke-width="1" fill="none"/><path d="M1271.3 647.4L1274.3 649.4L1271.3 651.4" stroke="#4848ff" stroke-width="0.9" fill="none"/>
<circle cx="1535.5" cy="656" r="2.2" stroke="#4848ff" stroke-width="1" fill="none"/><path d="M1540.5 654L1537.5 656L1540.5 658" stroke="#4848ff" stroke-width="0.9" fill="none"/>
<circle cx="1704" cy="531.3" r="2.2" stroke="#4848ff" stroke-width="1" fill="none"/><path d="M1699 529.3L1702 531.3L1699 533.3" stroke="#4848ff" stroke-width="0.9" fill="none"/>
<text x="1062.2" y="305.9" font-size="5.6" font-weight="bold" text-anchor="middle" fill="#000" font-family="Liberation Sans">365F</text>
<text x="942.5" y="306" font-size="5.6" font-weight="bold" text-anchor="middle" fill="#000" font-family="Liberation Sans">365D</text>
<text x="1155.2" y="264" font-size="5.6" font-weight="bold" text-anchor="middle" fill="#000" font-family="Liberation Sans">365I</text>
<text x="1365.8" y="306" font-size="5.6" font-weight="bold" text-anchor="middle" fill="#000" font-family="Liberation Sans">364F</text>
<text x="1458" y="264" font-size="5.6" font-weight="bold" text-anchor="middle" fill="#000" font-family="Liberation Sans">364I</text>
<text x="1551.8" y="305" font-size="5.6" font-weight="bold" text-anchor="middle" fill="#000" font-family="Liberation Sans">364D</text>
<text x="1688.4" y="268" font-size="5.6" font-weight="bold" text-anchor="middle" fill="#000" font-family="Liberation Sans">372H</text>
<text x="1660.8" y="415.8" font-size="5.6" font-weight="bold" text-anchor="middle" fill="#000" font-family="Liberation Sans">372K</text>
<text x="1246.3" y="364" font-size="5.6" font-weight="bold" text-anchor="middle" fill="#000" font-family="Liberation Sans">365B</text>
<text x="1062.5" y="403.9" font-size="5.6" font-weight="bold" text-anchor="middle" fill="#000" font-family="Liberation Sans">365G</text>
<text x="1366.5" y="403.8" font-size="5.6" font-weight="bold" text-anchor="middle" fill="#000" font-family="Liberation Sans">364G</text>
<text x="1549.8" y="403.8" font-size="5.6" font-weight="bold" text-anchor="middle" fill="#000" font-family="Liberation Sans">364C</text>
<text x="942" y="404" font-size="5.6" font-weight="bold" text-anchor="middle" fill="#000" font-family="Liberation Sans">366G</text>
<text x="1249.1" y="511.8" font-size="5.6" font-weight="bold" text-anchor="middle" fill="#000" font-family="Liberation Sans">368COR</text>
<text x="1104.4" y="574.2" font-size="5.6" font-weight="bold" text-anchor="middle" fill="#000" font-family="Liberation Sans">370CHS</text>
<text x="1406.8" y="582" font-size="5.6" font-weight="bold" text-anchor="middle" fill="#000" font-family="Liberation Sans">371CHS</text>
<text x="1651.1" y="575" font-size="5.6" font-weight="bold" text-anchor="middle" fill="#000" font-family="Liberation Sans">364CHS</text>
<text x="951.1" y="614.3" font-size="5.6" font-weight="bold" text-anchor="middle" fill="#000" font-family="Liberation Sans">368</text>
<text x="1256" y="611" font-size="5.6" font-weight="bold" text-anchor="middle" fill="#000" font-family="Liberation Sans">370</text>
<text x="1559.6" y="616" font-size="5.6" font-weight="bold" text-anchor="middle" fill="#000" font-family="Liberation Sans">371</text>
<text x="1343.4" y="694.1" font-size="5.6" font-weight="bold" text-anchor="middle" fill="#000" font-family="Liberation Sans">370A</text>
<text x="1485.2" y="699" font-size="5.6" font-weight="bold" text-anchor="middle" fill="#000" font-family="Liberation Sans">371B</text>
<text x="1026" y="698.9" font-size="5.6" font-weight="bold" text-anchor="middle" fill="#000" font-family="Liberation Sans">368A</text>
<text x="1181" y="696.1" font-size="5.6" font-weight="bold" text-anchor="middle" fill="#000" font-family="Liberation Sans">370B</text>
<text x="1635" y="699.1" font-size="5.6" font-weight="bold" text-anchor="middle" fill="#000" font-family="Liberation Sans">371A</text>
<text x="987.8" y="828" font-size="5.6" font-weight="bold" text-anchor="middle" fill="#000" font-family="Liberation Sans">379COR</text>
<text x="1850" y="743" font-size="5.6" font-weight="bold" text-anchor="middle" fill="#000" font-family="Liberation Sans">3ELVG</text>
<text x="1741" y="339" font-size="5.6" font-weight="bold" text-anchor="middle" fill="#000" font-family="Liberation Sans">372</text>
<text x="1851.6" y="656.1" font-size="5.6" font-weight="bold" text-anchor="middle" fill="#000" font-family="Liberation Sans">3ELVG</text>
<text x="1829" y="587.3" font-size="5.6" font-weight="bold" text-anchor="middle" fill="#000" font-family="Liberation Sans">371AN</text>
<text x="1877" y="522.6" font-size="5.6" font-weight="bold" text-anchor="middle" fill="#000" font-family="Liberation Sans">371A</text>
<path d="M1098.9 506L1513.1 574M920 522.9L1513.1 574M1528.5 510L1513.1 574M1513.1 574L1882 523M1513.1 574L1882 562.3M1513.1 574L1882 571.4M1513.1 574L1882 594" stroke="#4848ff" stroke-width="1.2" fill="none"/>
<path d="M1513.1 574L1882 525" stroke="#4848ff" stroke-width="1.4" fill="none"/>
</svg>
<svg class="a" style="left:940px;top:298px" width="24" height="135" viewBox="940 298 24 135" fill="none" stroke="#5b89bf">
<path d="M951 302.5v12.5M944.7 308.8h12.5" stroke-width="1.6"/>
<path d="M944.7 330.4h12.5" stroke-width="1.6"/>
<circle cx="951" cy="353.8" r="4" stroke-width="1.6"/><path d="M951 347.5v2.3M951 357.8v2.3M944.7 353.8h2.3M955 353.8h2.3" stroke-width="1.6"/>
<path d="M945.5 371h2M945.5 369v4M949.5 371h6.5v3.5M945.5 375v3.5h6M954 378.5h4M956 376.5v4" stroke-width="1.5"/>
<text x="951" y="406" font-size="17" text-anchor="middle" fill="#5b89bf" stroke="none" font-family="Liberation Sans">A</text>
<text x="951" y="427" font-size="17" text-anchor="middle" fill="#5b89bf" stroke="none" font-family="Liberation Sans">a</text>
</svg>
<div class="a" style="left:933px;top:225px;width:366px;height:22px;border-radius:4px;background:linear-gradient(#3a3a3a,#141414);opacity:0.95"></div>
<div class="t" style="left:937px;top:231.5px;font-size:10.6px;font-weight:bold;letter-spacing:-0.2px;color:#fff">Item(s) found: SRL;03;371CHS</div>
<svg class="a" style="left:1282px;top:229px" width="15" height="15" viewBox="0 0 15 15"><circle cx="7.5" cy="7.5" r="6.5" fill="#fff"/><path d="M4.8 4.8l5.4 5.4M10.2 4.8l-5.4 5.4" stroke="#222" stroke-width="2"/></svg>
<div class="a" style="left:1742px;top:225px;width:140px;height:507px;border-radius:6px;background:linear-gradient(rgba(0,0,0,0.7),rgba(0,0,0,0.9))"></div>
<div class="t" style="left:1745px;top:231px;font-size:10.8px;font-weight:bold;color:#fff">Assets &amp; Backgrounds</div>
<svg class="a" style="left:1864px;top:229px" width="14" height="14" viewBox="0 0 14 14"><circle cx="7" cy="7" r="6" fill="#fff"/><rect x="3.2" y="5.6" width="7.6" height="2.8" fill="#333"/></svg>
<div class="cb on" style="top:245.8px"></div><svg class="a" style="left:1746px;top:245.8px" width="11" height="11" viewBox="0 0 11 11"><path d="M2.3 5.6l2.2 2.3 4.3-5" stroke="#fff" stroke-width="1.6" fill="none"/></svg><div class="lg" style="left:1758px;top:248.4px;letter-spacing:-0.1px">Equipment</div>
<div class="cb" style="top:261.8px"></div><div class="lg" style="left:1758px;top:264.4px;letter-spacing:-0.1px">Labels of Equipment</div>
<div class="cb" style="top:277.8px"></div><div class="lg" style="left:1758px;top:280.4px;letter-spacing:-0.1px">Faceplates</div>
<div class="cb" style="top:293.8px"></div><div class="lg" style="left:1758px;top:296.4px;letter-spacing:-0.1px">Faceplates Text</div>
<div class="cb on" style="top:309.8px"></div><svg class="a" style="left:1746px;top:309.8px" width="11" height="11" viewBox="0 0 11 11"><path d="M2.3 5.6l2.2 2.3 4.3-5" stroke="#fff" stroke-width="1.6" fill="none"/></svg><div class="lg" style="left:1758px;top:312.4px;letter-spacing:-0.1px">Gross Area</div>
<div class="cb" style="top:325.8px"></div><div class="lg" style="left:1758px;top:328.4px;letter-spacing:-0.1px">Labels of Gross Area</div>
<div class="cb" style="top:341.8px"></div><div class="lg" style="left:1758px;top:344.4px;letter-spacing:-0.1px">Jack</div>
<div class="cb" style="top:357.8px"></div><div class="lg" style="left:1758px;top:360.4px;letter-spacing:-0.1px">Labels of Jack</div>
<div class="cb" style="top:373.8px"></div><div class="lg" style="left:1758px;top:376.4px;letter-spacing:-0.1px">Panel</div>
<div class="cb" style="top:389.8px"></div><div class="lg" style="left:1758px;top:392.4px;letter-spacing:-0.1px">Labels of Panel</div>
<div class="cb on" style="top:405.8px"></div><svg class="a" style="left:1746px;top:405.8px" width="11" height="11" viewBox="0 0 11 11"><path d="M2.3 5.6l2.2 2.3 4.3-5" stroke="#fff" stroke-width="1.6" fill="none"/></svg><div class="lg" style="left:1758px;top:408.4px;letter-spacing:-0.1px">Room</div>
<div class="cb on" style="top:421.8px"></div><svg class="a" style="left:1746px;top:421.8px" width="11" height="11" viewBox="0 0 11 11"><path d="M2.3 5.6l2.2 2.3 4.3-5" stroke="#fff" stroke-width="1.6" fill="none"/></svg><div class="lg" style="left:1758px;top:424.4px;letter-spacing:-0.1px">Labels of Room</div>
<div class="cb" style="top:437.8px"></div><div class="lg" style="left:1758px;top:440.4px;letter-spacing:-0.1px">rm_trial-assets</div>
<div class="cb" style="top:453.8px"></div><div class="lg" style="left:1758px;top:456.4px;letter-spacing:-0.1px">rm_trial-labels</div>
<div class="a" style="left:1745px;top:469px;width:117px;height:2px;background:#fff"></div>
<div class="cb" style="top:472.8px"></div><div class="lg" style="left:1758px;top:475.4px;letter-spacing:-0.75px">A-ANNO-TEXT</div>
<div class="cb" style="top:488.8px"></div><div class="lg" style="left:1758px;top:491.4px;letter-spacing:-0.75px">A-AREA-BDRY</div>
<div class="cb" style="top:504.8px"></div><div class="lg" style="left:1758px;top:507.4px;letter-spacing:-0.75px">A-DETL-GENF</div>
<div class="cb" style="top:520.8px"></div><div class="lg" style="left:1758px;top:523.4px;letter-spacing:-0.75px">A-DOOR</div>
<div class="cb" style="top:536.8px"></div><div class="lg" style="left:1758px;top:539.4px;letter-spacing:-0.75px">A-EQPM</div>
<div class="cb" style="top:552.8px"></div><div class="lg" style="left:1758px;top:555.4px;letter-spacing:-0.75px">A-FLOR-HRAL</div>
<div class="cb" style="top:568.8px"></div><div class="lg" style="left:1758px;top:571.4px;letter-spacing:-0.75px">A-FLOR-OTLN</div>
<div class="cb" style="top:584.8px"></div><div class="lg" style="left:1758px;top:587.4px;letter-spacing:-0.75px">A-FLOR-STRS</div>
<div class="cb" style="top:600.8px"></div><div class="lg" style="left:1758px;top:603.4px;letter-spacing:-0.75px">A-GLAZ</div>
<div class="cb" style="top:616.8px"></div><div class="lg" style="left:1758px;top:619.4px;letter-spacing:-0.75px">A-GLAZ-CWMG</div>
<div class="cb" style="top:632.8px"></div><div class="lg" style="left:1758px;top:635.4px;letter-spacing:-0.75px">A-WALL</div>
<div class="cb" style="top:648.8px"></div><div class="lg" style="left:1758px;top:651.4px;letter-spacing:-0.75px">FN</div>
<div class="cb" style="top:664.8px"></div><div class="lg" style="left:1758px;top:667.4px;letter-spacing:-0.75px">FP</div>
<div class="cb" style="top:680.8px"></div><div class="lg" style="left:1758px;top:683.4px;letter-spacing:-0.75px">P-SANR-FIXT</div>
<div class="cb" style="top:696.8px"></div><div class="lg" style="left:1758px;top:699.4px;letter-spacing:-0.75px">PN</div>
<div class="cb" style="top:712.8px"></div><div class="lg" style="left:1758px;top:715.4px;letter-spacing:-0.1px">text</div>
</div>
<div id="icons">
<!-- logo -->
<svg class="a" style="left:0;top:0" width="58" height="50" viewBox="0 0 58 50">
  <path d="M22.4 12.9H29L24.2 26.6h-6.8z" fill="#f5c30a"/>
  <path d="M30.3 12.9L35.5 26.6H25z" fill="#27c1ea"/>
  <path d="M18.6 27.4h5.6L19.4 41H11.9z" fill="#1f6fff"/>
  <path d="M25 27.4h10.5L41 41z" fill="#ff5a3c"/>
</svg>
<!-- sidebar icons -->
<svg class="a" style="left:0;top:60px" width="58" height="450" viewBox="0 60 58 450" fill="none" stroke="#fff" stroke-width="1.3" stroke-linejoin="round">
  <path d="M20.8 77.5L27.4 70.8 34 77.5M22.7 75.8v6.6h9.4v-6.6M25.9 82.4v-4h3v4"/>
  <circle cx="28.8" cy="112.9" r="4.6" stroke-width="1.5"/><path d="M25.4 116.3l-3.6 3.4" stroke-width="2.2" stroke-linecap="round"/>
  <path d="M27.4 145.2l2.1 4.4 4.8.6-3.5 3.3.9 4.8-4.3-2.3-4.3 2.3.9-4.8-3.5-3.3 4.8-.6z" stroke-width="1.4"/>
  <path d="M21 196.3h14M22.8 196.3v-12.5h6v12.5M28.8 188.3h5v8" stroke-width="1.3"/><g fill="#fff" stroke="none"><rect x="24" y="185.3" width="1.4" height="1.4"/><rect x="26.3" y="185.3" width="1.4" height="1.4"/><rect x="24" y="188.3" width="1.4" height="1.4"/><rect x="26.3" y="188.3" width="1.4" height="1.4"/><rect x="24" y="191.3" width="1.4" height="1.4"/><rect x="26.3" y="191.3" width="1.4" height="1.4"/><rect x="30" y="191" width="1.4" height="1.4"/><rect x="32" y="191" width="1.4" height="1.4"/></g>
  <path d="M22.3 221.8v12.6h12M25 224.5h4.5M25 228h7.5M25 231.5h5" stroke-width="1.5"/>
  <rect x="21.8" y="259.5" width="11.6" height="11.6" stroke-width="1.3"/><path d="M21.8 265.3h4M29 265.3h4.4M27.6 259.5v3M27.6 268v3M25 262v2M30 266.5v2" stroke-width="1.1"/>
  <rect x="22.5" y="296.8" width="9.8" height="12.5" rx="0.8" stroke-width="1.3"/><path d="M22.5 301h9.8M22.5 305h9.8M24.5 299h3M24.5 303h3M24.5 307h3" stroke-width="1"/>
  <g transform="translate(34 333.8) scale(-0.5 0.5)"><path d="M22.7 19l-9.1-9.1c.9-2.3.4-5-1.5-6.9-2-2-5-2.4-7.4-1.3L9 6 6 9 1.6 4.7C.4 7.1.9 10.1 2.9 12.1c1.9 1.9 4.6 2.4 6.9 1.5l9.1 9.1c.4.4 1 .4 1.4 0l2.3-2.3c.5-.4.5-1.1.1-1.4z" stroke-width="2.4"/></g>
  <path d="M22.5 384.5c0-7 3-11 11.5-12.5 0.5 8-3 12.5-10.8 11.8M22.5 384.5l8-8" stroke-width="1.3"/>
  <path d="M21.3 418.5a6.2 6.2 0 0 1 12.4 0" stroke-width="1.3"/><path d="M30.8 414.5a4.3 4.3 0 1 0 0.3 5.5" stroke-width="1.3"/><path d="M33 419.5c0 2.5-2 3.5-5 3.5" stroke-width="1.1"/><rect x="19.6" y="416" width="2.4" height="4.6" rx="1.2" fill="#fff" stroke="none"/><rect x="33" y="416" width="2.4" height="4.6" rx="1.2" fill="#fff" stroke="none"/>
  <path d="M25.3 458.8c-1.5-1.3-3-3.2-3-5.6a5.2 5.2 0 0 1 10.4 0c0 2.4-1.5 4.3-3 5.6z" stroke-width="1.3"/><rect x="25" y="459" width="4.8" height="2.8" rx="1" fill="#fff" stroke="none"/><circle cx="30.5" cy="451" r="0.5" fill="#fff"/>
  <path d="M32.14 489.74 L33.87 489.71 L33.87 492.29 L32.14 492.26 L31.64 493.46 L32.89 494.67 L31.07 496.49 L29.86 495.24 L28.66 495.74 L28.69 497.47 L26.11 497.47 L26.14 495.74 L24.94 495.24 L23.73 496.49 L21.91 494.67 L23.16 493.46 L22.66 492.26 L20.93 492.29 L20.93 489.71 L22.66 489.74 L23.16 488.54 L21.91 487.33 L23.73 485.51 L24.94 486.76 L26.14 486.26 L26.11 484.53 L28.69 484.53 L28.66 486.26 L29.86 486.76 L31.07 485.51 L32.89 487.33 L31.64 488.54Z" stroke-width="1.2"/><circle cx="27.4" cy="491" r="2.3" stroke-width="1.2"/>
</svg>
<svg class="a" style="left:0;top:903px" width="58" height="26" viewBox="0 903 58 26"><path d="M23.3 915.5l4.5 4.3-4.5 4.3" stroke="#fff" stroke-width="1.6" fill="none" stroke-linecap="round"/></svg>
<!-- globe -->
<svg class="a" style="left:77px;top:10px" width="36" height="36" viewBox="0 0 36 36" fill="none" stroke="#fff" stroke-width="1.5">
  <circle cx="18.5" cy="18.4" r="11.2"/><ellipse cx="18.5" cy="18.4" rx="5" ry="11.2"/><path d="M18.5 7.2v22.4M7.3 18.4h22.4M9 12.8h19M9 24h19"/>
</svg>
<!-- header right icons -->
<svg class="a" style="left:1735px;top:8px" width="160" height="40" viewBox="1735 8 160 40">
  <circle cx="1751" cy="27.7" r="8.6" fill="#005bbb"/>
  <path d="M1748.2 25.2a2.9 2.9 0 1 1 4.4 2.4c-.9.6-1.1 1.1-1.1 2v.5" stroke="#fff" stroke-width="1.9" fill="none" stroke-linecap="round"/><circle cx="1751.5" cy="33" r="1.1" fill="#fff"/>
  <path d="M1791.4 18.3l2.3 4.8 5.2.6-3.9 3.6 1 5.2-4.6-2.6-4.6 2.6 1-5.2-3.9-3.6 5.2-.6z" stroke="#005bbb" stroke-width="1.3" fill="none" stroke-linejoin="round"/>
  <circle cx="1796.4" cy="32.3" r="4.8" fill="#005bbb" stroke="#fff" stroke-width="1"/><path d="M1796.4 29.8v5M1793.9 32.3h5" stroke="#fff" stroke-width="1.3"/>
  <circle cx="1835.4" cy="27.3" r="12.9" stroke="#005bbb" stroke-width="1.8" fill="none"/>
  <defs><clipPath id="avc"><circle cx="1835.4" cy="27.3" r="12"/></clipPath></defs><g clip-path="url(#avc)" fill="#005bbb"><path d="M1831 24.3c0-3.2 1.9-5 4.4-5s4.4 1.8 4.4 5c0 2.4-.8 4.3-2 5.2v1.6c4 .6 7.5 2 8.6 4.4v6h-22v-6c1.1-2.4 4.6-3.8 8.6-4.4v-1.6c-1.2-.9-2-2.8-2-5.2z"/></g>
  
  <circle cx="1869.3" cy="28.9" r="1.8" fill="#005bbb"/><circle cx="1874.5" cy="28.9" r="1.8" fill="#005bbb"/><circle cx="1879.6" cy="28.9" r="1.8" fill="#005bbb"/>
</svg>
<!-- filter chevron -->
<svg class="a" style="left:78px;top:103px" width="16" height="12" viewBox="78 102 16 12"><path d="M81.5 105.5l4.8 4.5 4.8-4.5" stroke="#1d2f4f" stroke-width="1.9" fill="none"/></svg>
<!-- select chevrons -->
<svg class="a" style="left:860px;top:146px" width="150" height="16" viewBox="860 146 150 16" fill="none"><path d="M863.5 151.5l4 4 4-4" stroke="#666" stroke-width="1.4"/><path d="M992 151.5l4 4 4-4" stroke="#444" stroke-width="1.6"/></svg>
<svg class="a" style="left:1135px;top:200px" width="14" height="14" viewBox="1135 200 14 14"><path d="M1137.8 204.8l4.2 4.2 4.2-4.2" stroke="#111" stroke-width="1.8" fill="none"/></svg>
<!-- column icon -->
<svg class="a" style="left:254px;top:201px" width="14" height="13" viewBox="254 201 14 13"><rect x="255.8" y="202.3" width="9.6" height="9.8" fill="none" stroke="#9ba1a8" stroke-width="1.3"/><rect x="257.8" y="202.3" width="2" height="9.8" fill="#9ba1a8"/><rect x="261.4" y="202.3" width="2" height="9.8" fill="#9ba1a8"/></svg>
<!-- viewer toolbar icons -->
<svg class="a" style="left:1160px;top:196px" width="95" height="22" viewBox="1160 196 95 22" fill="none">
  <path d="M1170.8 206.8L1176.3 201.3M1170.8 206.8H1177.8M1170.8 206.8L1176.3 212.3" stroke="#3b6fb5" stroke-width="1.3"/>
  <circle cx="1176.6" cy="201" r="1.3" fill="#6a9bd8"/><circle cx="1178" cy="206.8" r="1.3" stroke="#6a9bd8" stroke-width="0.9"/><circle cx="1176.6" cy="212.6" r="1.3" fill="#6a9bd8"/>
  <circle cx="1168.5" cy="206.8" r="2" stroke="#f0c040" stroke-width="1.4"/>
  <g transform="translate(1207 206.8)"><circle r="3.7" stroke="#7a7f88" stroke-width="2.6"/><path d="M0-6.2v2.2M0 4v2.2M-6.2 0h2.2M4 0h2.2M-4.4-4.4l1.5 1.5M2.9 2.9l1.5 1.5M-4.4 4.4l1.5-1.5M2.9-2.9l1.5-1.5" stroke="#7a7f88" stroke-width="2.6"/></g>
  <path d="M1237 211l8.5-8.5M1241.5 201.8h4.6v4.6M1236.3 206.8v4.9h4.9" stroke="#7a7f88" stroke-width="1.6"/>
</svg>

</div>
</body></html>
